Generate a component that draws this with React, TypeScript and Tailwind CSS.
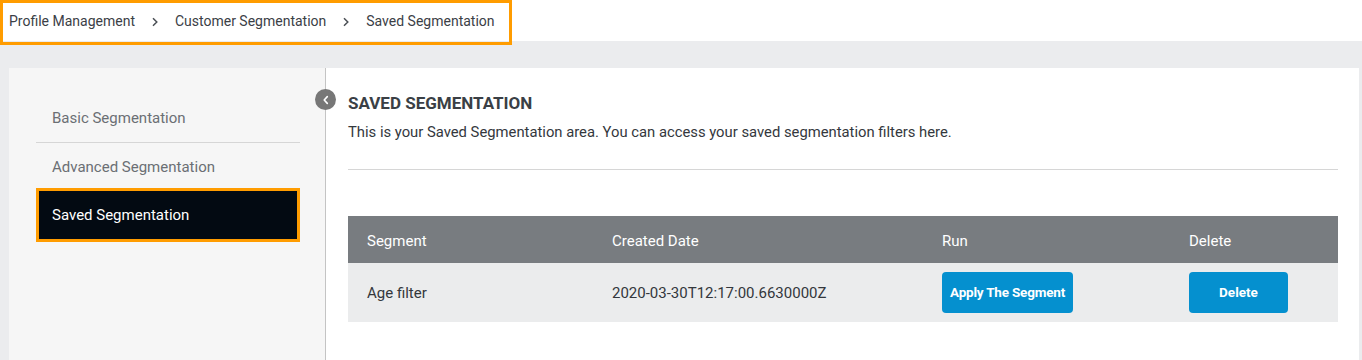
import React from 'react';

const crumbs = ['Profile Management', 'Customer Segmentation', 'Saved Segmentation'];

const Chevron = () => (
  <svg width="10" height="10" viewBox="0 0 10 10" className="mx-[15px]">
    <path d="M3 1.2 L6.8 5 L3 8.8" fill="none" stroke="#4a4f55" strokeWidth="1.5" />
  </svg>
);

const App = () => {
  return (
    <div className="w-[1362px] h-[360px] overflow-hidden bg-[#ebecee] font-['Roboto',sans-serif]">
      {/* Breadcrumb header */}
      <header className="h-[41px] bg-white relative z-10">
        <nav className="flex items-center h-[45px] w-[512px] border-[3px] border-[#ff9c00] pl-[6px] pb-[2px] text-[14px] text-[#3b4046]">
          {crumbs.map((c, i) => (
            <React.Fragment key={c}>
              {i > 0 && <Chevron />}
              <span>{c}</span>
            </React.Fragment>
          ))}
        </nav>
      </header>

      {/* Card */}
      <div className="mt-[27px] ml-[9px] w-[1350px] h-[292px] flex bg-white">
        {/* Sidebar */}
        <aside className="w-[317px] shrink-0 bg-[#f6f6f6] border-r border-[#c4c4c4] pt-[27px] pl-[27px] pr-[25px]">
          <div className="h-[48px] flex items-center pl-[16px] text-[15px] text-[#6b6f74] border-b border-[#d6d6d6]">
            Basic Segmentation
          </div>
          <div className="h-[45px] flex items-center pt-[3px] pl-[16px] text-[15px] text-[#6b6f74]">
            Advanced Segmentation
          </div>
          <div className="h-[54px] flex items-center pl-[13px] text-[15px] text-white bg-[#030a12] border-[3px] border-[#ff9c00] w-[264px]">
            Saved Segmentation
          </div>
        </aside>

        {/* Main content */}
        <main className="relative flex-1 pl-[22px] pr-[21px] pt-[24px]">
          <button className="absolute -left-[11px] top-[21px] w-[21px] h-[21px] rounded-full bg-[#777777] flex items-center justify-center">
            <svg width="12" height="12" viewBox="0 0 12 12">
              <path d="M7.3 2.6 L4.2 6 L7.3 9.4" fill="none" stroke="white" strokeWidth="1.6" strokeLinecap="round" strokeLinejoin="round" />
            </svg>
          </button>
          <h1 className="text-[17px] font-bold text-[#3a3f45] leading-[20px] pt-[1px]">SAVED SEGMENTATION</h1>
          <p className="mt-[9px] text-[14.8px] text-[#34383d] leading-[20px]">
            This is your Saved Segmentation area. You can access your saved segmentation filters here.
          </p>
          <div className="mt-[27px] border-t border-[#d6d6d6]" />

          {/* Table */}
          <div className="mt-[46px] text-[15px]">
            <div className="grid grid-cols-[245px_330px_247px_1fr] h-[47px] items-center pt-[3px] bg-[#787c80] text-white">
              <div className="pl-[19px]">Segment</div>
              <div className="pl-[19px]">Created Date</div>
              <div className="pl-[19px]">Run</div>
              <div className="pl-[19px]">Delete</div>
            </div>
            <div className="grid grid-cols-[245px_330px_247px_1fr] h-[59px] items-center bg-[#ebeced] text-[#33373c]">
              <div className="pl-[19px] pt-[2px]">Age filter</div>
              <div className="pl-[19px] pt-[2px]">2020-03-30T12:17:00.6630000Z</div>
              <div className="pl-[19px]">
                <button className="h-[41px] w-[131px] rounded-[4px] bg-[#0590cf] text-white text-[13.5px] font-bold tracking-[-0.2px]">
                  Apply The Segment
                </button>
              </div>
              <div className="pl-[19px]">
                <button className="h-[41px] w-[99px] rounded-[4px] bg-[#0590cf] text-white text-[13.5px] font-bold">
                  Delete
                </button>
              </div>
            </div>
          </div>
        </main>
      </div>
    </div>
  );
};

export default App;
